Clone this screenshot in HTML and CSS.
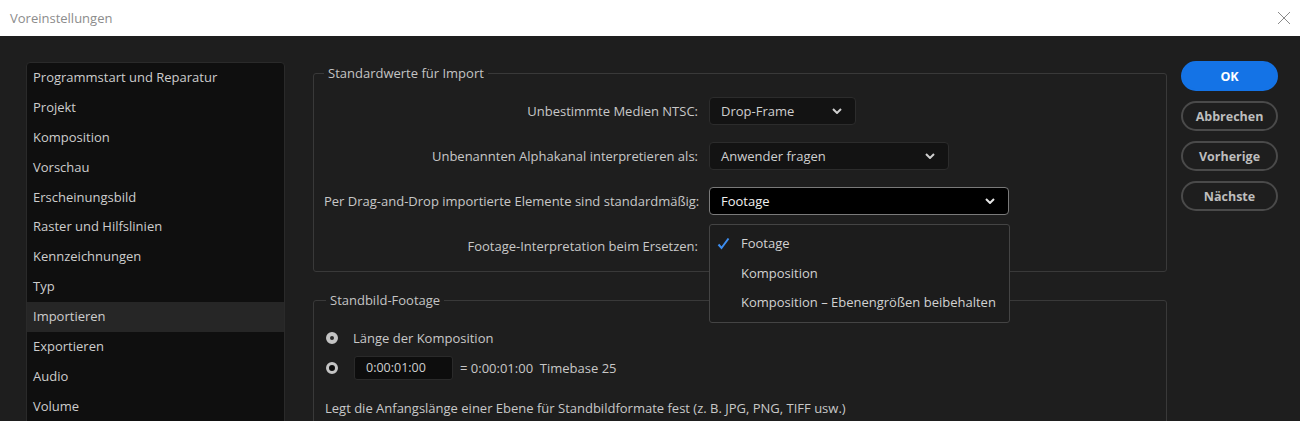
FILE: index.html
```html
<!DOCTYPE html>
<html lang="de">
<head>
    <meta charset="UTF-8">
    <meta name="viewport" content="width=device-width, initial-scale=1.0">
    <title>Voreinstellungen</title>
    <link rel="stylesheet" href="styles.css">
</head>
<body>
    <header class="titlebar">
        <span class="title">Voreinstellungen</span>
        <svg class="close" width="14" height="14" viewBox="0 0 14 14">
            <path d="M1 1 L13 13 M13 1 L1 13" stroke="#8a8a8a" stroke-width="1" fill="none"/>
        </svg>
    </header>

    <div class="dialog">
        <nav class="sidebar">
            <ul>
                <li>Programmstart und Reparatur</li>
                <li>Projekt</li>
                <li>Komposition</li>
                <li>Vorschau</li>
                <li>Erscheinungsbild</li>
                <li>Raster und Hilfslinien</li>
                <li>Kennzeichnungen</li>
                <li>Typ</li>
                <li class="active">Importieren</li>
                <li>Exportieren</li>
                <li>Audio</li>
                <li>Volume</li>
            </ul>
        </nav>

        <main class="panel">
            <fieldset class="group">
                <legend>Standardwerte für Import</legend>
                <div class="form-grid">
                    <label>Unbestimmte Medien NTSC:</label>
                    <div class="select w-small">
                        <span>Drop-Frame</span>
                        <svg class="chevron" width="10" height="6" viewBox="0 0 10 6"><path d="M1 1 L5 5 L9 1" stroke="#cfcfcf" stroke-width="2" fill="none"/></svg>
                    </div>

                    <label>Unbenannten Alphakanal interpretieren als:</label>
                    <div class="select w-mid">
                        <span>Anwender fragen</span>
                        <svg class="chevron" width="10" height="6" viewBox="0 0 10 6"><path d="M1 1 L5 5 L9 1" stroke="#cfcfcf" stroke-width="2" fill="none"/></svg>
                    </div>

                    <label>Per Drag-and-Drop importierte Elemente sind standardmäßig:</label>
                    <div class="select w-large open">
                        <span>Footage</span>
                        <svg class="chevron" width="10" height="6" viewBox="0 0 10 6"><path d="M1 1 L5 5 L9 1" stroke="#e6e6e6" stroke-width="2" fill="none"/></svg>
                        <ul class="menu">
                            <li class="checked">
                                <svg class="check" width="13" height="13" viewBox="0 0 13 13"><path d="M1.5 7.5 L4.5 11 L11.5 1.5" stroke="#3d8ef0" stroke-width="2" fill="none"/></svg>
                                Footage
                            </li>
                            <li>Komposition</li>
                            <li>Komposition – Ebenengrößen beibehalten</li>
                        </ul>
                    </div>

                    <label>Footage-Interpretation beim Ersetzen:</label>
                    <div class="select-slot"></div>
                </div>
            </fieldset>

            <fieldset class="group still">
                <legend>Standbild-Footage</legend>
                <div class="radio-row">
                    <span class="radio selected"></span>
                    <span>Länge der Komposition</span>
                </div>
                <div class="radio-row">
                    <span class="radio"></span>
                    <span class="timecode">0:00:01:00</span>
                    <span class="equals">= 0:00:01:00&nbsp;&nbsp;Timebase 25</span>
                </div>
                <p class="hint">Legt die Anfangslänge einer Ebene für Standbildformate fest (z. B. JPG, PNG, TIFF usw.)</p>
            </fieldset>
        </main>

        <aside class="actions">
            <button class="primary">OK</button>
            <button>Abbrechen</button>
            <button>Vorherige</button>
            <button>Nächste</button>
        </aside>
    </div>
</body>
</html>
```

FILE: styles.css
```css
body {
    margin: 0;
    padding: 0;
    background-color: #1e1e1e;
    font-family: "Open Sans", "Liberation Sans", sans-serif;
    color: #c8c8c8;
    overflow: hidden;
}

.titlebar {
    height: 36px;
    background: #fff;
    display: flex;
    align-items: center;
    justify-content: space-between;
    padding: 0 9px 0 10px;
}

.title {
    font-size: 13px;
    color: #8c8c8c;
}

.dialog {
    display: flex;
    align-items: flex-start;
    height: 385px;
    padding: 25px 0 0 26px;
    box-sizing: border-box;
    overflow: hidden;
}

.sidebar {
    width: 259px;
    height: 400px;
    margin-top: 1px;
    flex-shrink: 0;
    background: #0f0f0f;
    border: 1px solid #2a2a2a;
    border-radius: 4px;
    box-sizing: border-box;
}

.sidebar ul {
    list-style: none;
    margin: 0;
    padding: 0;
}

.sidebar li {
    height: 29.9px;
    line-height: 29.9px;
    padding-left: 6px;
    font-size: 13px;
    color: #cdcdcd;
}

.sidebar li.active {
    background: #262626;
}

.panel {
    width: 854px;
    margin-left: 28px;
    padding-top: 4px;
    flex-shrink: 0;
}

.group {
    margin: 0;
    padding: 15px 10px 11px;
    border: 1px solid #393939;
    border-radius: 3px;
}

.group legend {
    padding: 0 4px;
    font-size: 13px;
    line-height: 17px;
    color: #c4c4c4;
}

.form-grid {
    display: grid;
    grid-template-columns: 374px auto;
    column-gap: 11px;
    row-gap: 17px;
    align-items: center;
}

.form-grid label {
    text-align: right;
    font-size: 13px;
    color: #c8c8c8;
    white-space: nowrap;
}

.select {
    position: relative;
    height: 28px;
    display: flex;
    align-items: center;
    justify-content: space-between;
    padding: 0 13px 0 11px;
    background: #131313;
    border: 1px solid #2c2c2c;
    border-radius: 4px;
    box-sizing: border-box;
    font-size: 13px;
    color: #cfcfcf;
}

.select-slot {
    height: 28px;
}

.w-small { width: 147px; }
.w-mid { width: 240px; }
.w-large { width: 300px; }

.select.open {
    background: #000;
    border-color: #7a7a7a;
    color: #f0f0f0;
}

.menu {
    position: absolute;
    top: 36px;
    left: -1px;
    width: 301px;
    margin: 0;
    padding: 4px 0 4px;
    list-style: none;
    background: #1c1c1c;
    border: 1px solid #444;
    border-radius: 3px;
    box-sizing: border-box;
    z-index: 2;
}

.menu li {
    position: relative;
    height: 29.5px;
    line-height: 29.5px;
    padding-left: 31px;
    font-size: 13px;
    color: #d2d2d2;
}

.check {
    position: absolute;
    left: 7px;
    top: 8px;
}

.still {
    margin-top: 20px;
    padding: 17px 12px 40px;
}

.radio-row {
    display: flex;
    align-items: center;
    height: 24px;
    font-size: 13px;
    color: #c8c8c8;
}

.radio-row + .radio-row {
    margin-top: 6px;
}

.radio {
    width: 12px;
    height: 12px;
    border-radius: 50%;
    border: 3px solid #c4c4c4;
    background: #0c0c0c;
    box-sizing: border-box;
    margin-right: 15px;
    flex-shrink: 0;
}

.radio.selected {
    background: #c4c4c4;
    position: relative;
}

.radio.selected::after {
    content: "";
    position: absolute;
    left: 1px;
    top: 1px;
    width: 4px;
    height: 4px;
    border-radius: 50%;
    background: #2a2a2a;
}

.timecode {
    width: 99px;
    height: 24px;
    line-height: 22px;
    padding-left: 11px;
    margin-left: 1px;
    box-sizing: border-box;
    background: #0d0d0d;
    border: 1px solid #2a2a2a;
    border-radius: 3px;
    font-size: 12.5px;
    color: #cfcfcf;
}

.equals {
    margin-left: 7px;
}

.hint {
    margin: 19px 0 0 -1px;
    font-size: 13px;
    line-height: 18px;
    color: #c8c8c8;
}

.actions {
    display: flex;
    flex-direction: column;
    gap: 10px;
    width: 97px;
    margin-left: 14px;
    flex-shrink: 0;
}

.actions button {
    height: 30px;
    border-radius: 15px;
    border: 2px solid #4a4a4a;
    background: transparent;
    color: #bdbdbd;
    font-family: "Open Sans", "Liberation Sans", sans-serif;
    font-size: 12.5px;
    font-weight: 700;
    cursor: pointer;
}

.actions button.primary {
    background: #1473e6;
    border-color: #1473e6;
    color: #fff;
}
```
